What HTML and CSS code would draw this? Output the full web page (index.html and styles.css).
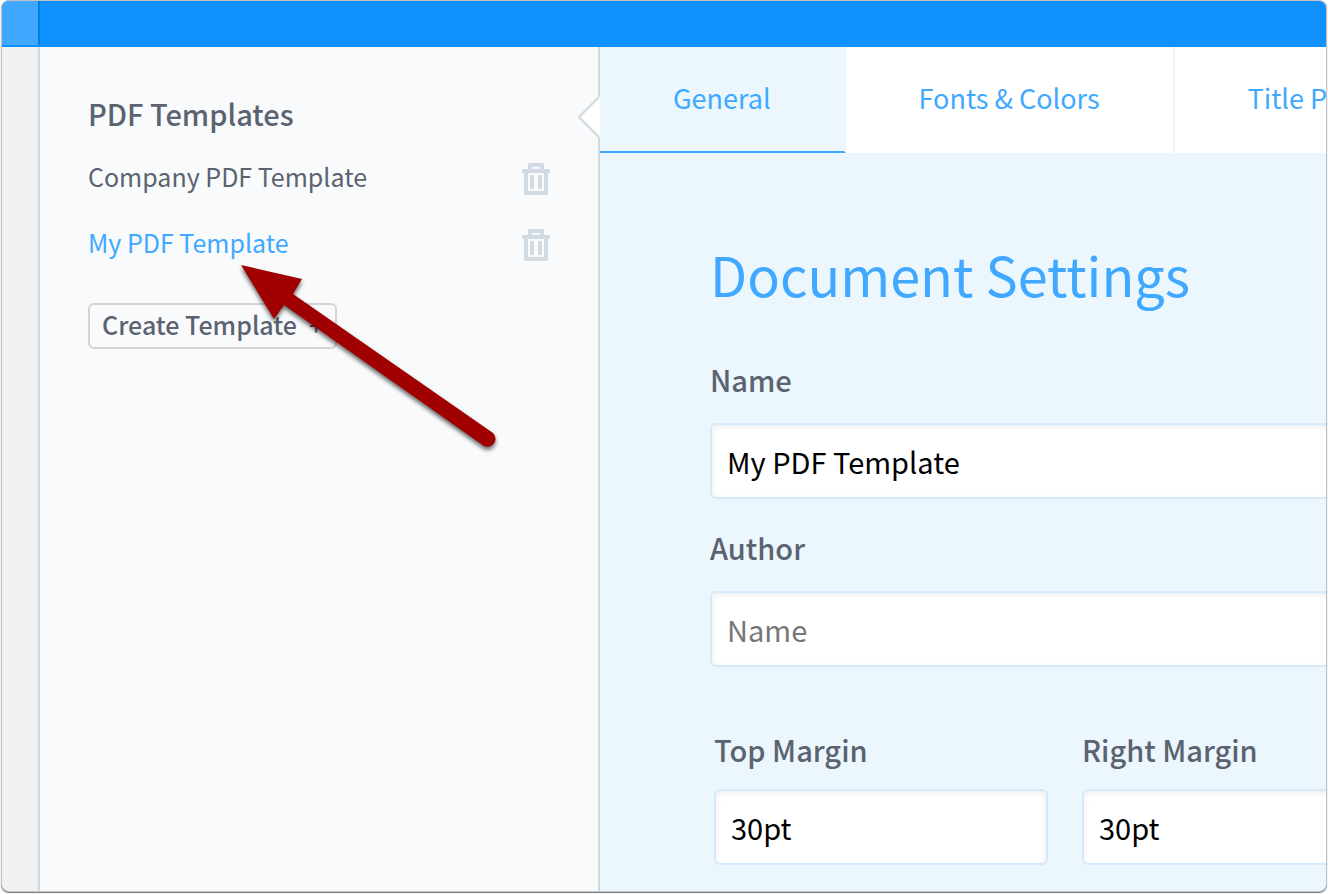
FILE: index.html
```html
<!DOCTYPE html>
<html lang="en">
<head>
  <meta charset="UTF-8">
  <title>PDF Templates</title>
  <link rel="stylesheet" href="styles.css">
</head>
<body>

  <div class="window">
    <header class="topbar">
      <div class="topbar-menu"></div>
    </header>

    <div class="main">
      <div class="rail"></div>

      <aside class="sidebar">
        <h2>PDF Templates</h2>
        <ul class="template-list">
          <li>
            <a href="#company">Company PDF Template</a>
            <button type="button" class="delete" aria-label="Delete Company PDF Template">
              <svg width="28" height="32" viewBox="0 0 28 32">
                <path fill-rule="evenodd" d="M7 0H21L22 1V6H27L28 7V9L27 10H26V31L25 32H3L2 31V10H1L0 9V7L1 6H6V1ZM10 4V6H18V4ZM6 10V28H22V10Z"/>
                <rect x="8" y="12" width="4" height="14" rx="1"/>
                <rect x="16" y="12" width="4" height="14" rx="1"/>
              </svg>
            </button>
          </li>
          <li>
            <a href="#mine" class="active">My PDF Template</a>
            <button type="button" class="delete" aria-label="Delete My PDF Template">
              <svg width="28" height="32" viewBox="0 0 28 32">
                <path fill-rule="evenodd" d="M7 0H21L22 1V6H27L28 7V9L27 10H26V31L25 32H3L2 31V10H1L0 9V7L1 6H6V1ZM10 4V6H18V4ZM6 10V28H22V10Z"/>
                <rect x="8" y="12" width="4" height="14" rx="1"/>
                <rect x="16" y="12" width="4" height="14" rx="1"/>
              </svg>
            </button>
          </li>
        </ul>
        <button type="button" class="create">Create Template <span>+</span></button>

        <svg class="notch" width="22" height="42" viewBox="0 0 22 42">
          <path d="M22 0L1 21L22 42Z" fill="#fff"/>
          <path d="M21 1L1 21L21 41" fill="none" stroke="#d0d9e0" stroke-width="2"/>
        </svg>

        <svg class="arrow" width="280" height="205" viewBox="0 0 280 205">
          <path d="M11 8L72 22L63 37L263 176A8 8 0 0 1 254 189L54 48L44 62Z" fill="#a00000"/>
        </svg>
      </aside>

      <section class="content">
        <nav class="tabs">
          <a href="#general" class="active">General</a>
          <a href="#fonts">Fonts &amp; Colors</a>
          <a href="#title">Title Page</a>
        </nav>

        <form class="settings">
          <h1>Document Settings</h1>
          <div class="form-group">
            <label for="name">Name</label>
            <input type="text" id="name" value="My PDF Template">
          </div>
          <div class="form-group">
            <label for="author">Author</label>
            <input type="text" id="author" placeholder="Name">
          </div>
          <div class="margins">
            <div class="form-group">
              <label for="top">Top Margin</label>
              <input type="text" id="top" value="30pt">
            </div>
            <div class="form-group">
              <label for="right">Right Margin</label>
              <input type="text" id="right" value="30pt">
            </div>
          </div>
        </form>
      </section>
    </div>
  </div>

</body>
</html>
```
FILE: styles.css
```css
* {
  box-sizing: border-box;
}

body {
  margin: 0;
  padding: 1px 2px 3px;
  height: 100vh;
  overflow: hidden;
  background: #fff;
  color: #5b6270;
  font-family: "Noto Sans CJK SC", "Noto Sans", sans-serif;
  font-size: 25px;
}

a {
  color: inherit;
  text-decoration: none;
}

.window {
  display: flex;
  flex-direction: column;
  height: 100%;
  overflow: hidden;
  border-radius: 7px;
  box-shadow: 0 0 0 1px #c0c2c4, 0 1px 1px 1px #777;
}

.topbar {
  flex: none;
  height: 46px;
  background: #0f92ff;
}

.topbar-menu {
  width: 38px;
  height: 44px;
  background: #40a9ff;
  border-right: 2px solid #007fe0;
}

.main {
  display: flex;
  flex: 1;
  min-height: 0;
}

.rail {
  flex: none;
  width: 38px;
  background: #f0f1f3;
  border-right: 2px solid #d0d9e0;
}

.sidebar {
  position: relative;
  flex: none;
  width: 560px;
  padding: 48px;
  background: #f8fafc;
  border-right: 2px solid #d0d9e0;
}

.sidebar h2 {
  margin: 0 0 15px;
  font-size: 29px;
  font-weight: 500;
  line-height: 36px;
}

.template-list {
  margin: 0 0 25px;
  padding: 0;
  list-style: none;
}

.template-list li {
  display: flex;
  justify-content: space-between;
  align-items: center;
  height: 66px;
}

.template-list a {
  padding-bottom: 6px;
}

.template-list .active {
  color: #40a9ff;
}

.delete {
  padding: 0;
  border: none;
  background: none;
  cursor: pointer;
}

.delete svg {
  display: block;
  fill: #d2dae3;
}

.create {
  display: flex;
  align-items: center;
  gap: 12px;
  height: 46px;
  padding: 0 12px 4px;
  border: 2px solid #d3d4d6;
  border-radius: 6px;
  background: none;
  color: inherit;
  font: inherit;
  font-weight: 500;
  cursor: pointer;
}

.notch {
  position: absolute;
  top: 49px;
  right: -2px;
}

.arrow {
  position: absolute;
  top: 210px;
  left: 190px;
  z-index: 1;
  filter: drop-shadow(0 3px 2px rgba(0, 0, 0, 0.6));
  pointer-events: none;
}

.content {
  flex: 1;
  min-width: 0;
  overflow: hidden;
  background: #ebf6fd;
}

.tabs {
  display: flex;
  height: 106px;
  background: #fff;
  color: #40a9ff;
  font-size: 27px;
}

.tabs a {
  flex: none;
  padding: 0 73px;
  border-right: 2px solid #ebf6fd;
  line-height: 102px;
}

.tabs .active {
  background: #ebf6fd;
  border-bottom: 2px solid #40a9ff;
}

.settings {
  min-width: 930px;
  padding: 82px 110px 0;
}

.settings h1 {
  margin: 0 0 46px;
  color: #40a9ff;
  font-size: 54px;
  font-weight: 400;
  line-height: 78px;
}

.form-group {
  margin-bottom: 28px;
}

.form-group label {
  display: block;
  margin-bottom: 24px;
  font-size: 29px;
  font-weight: 500;
  line-height: 40px;
}

.form-group input {
  display: block;
  width: 100%;
  height: 76px;
  padding: 0 15px;
  border: 2px solid #d4eafc;
  border-radius: 6px;
  background: #fff;
  box-shadow: inset 0 2px 6px rgba(0, 0, 0, 0.08);
  color: #000;
  font: inherit;
  font-size: 29px;
}

.form-group input::placeholder {
  color: #777;
}

.margins {
  display: grid;
  grid-template-columns: 1fr 1fr;
  gap: 34px;
  padding: 34px 4px 0;
}

.margins label {
  margin-bottom: 20px;
}
```
